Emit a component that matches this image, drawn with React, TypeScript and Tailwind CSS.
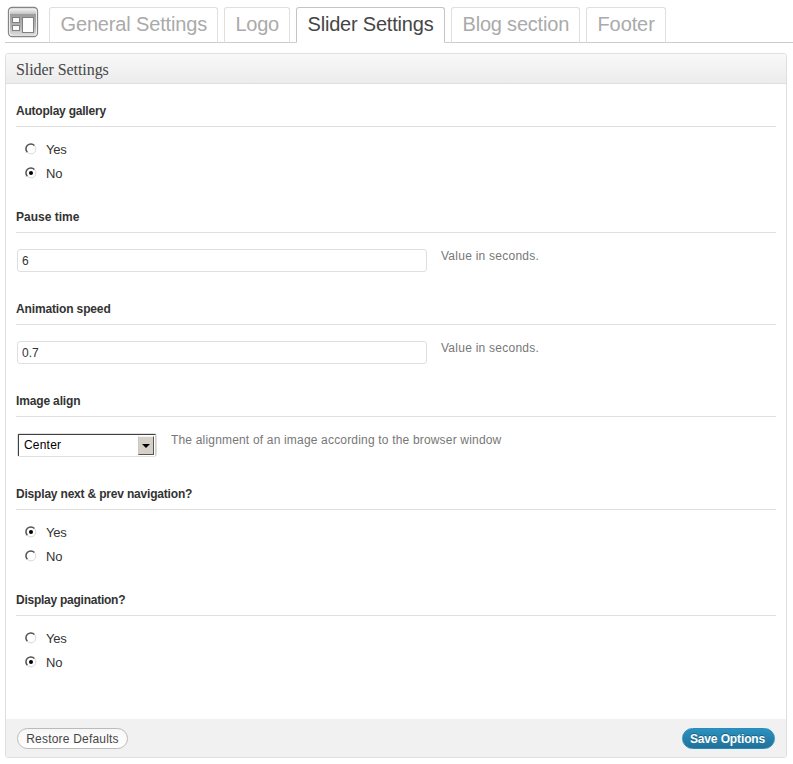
import React from "react";

type TabProps = { label: string; width: string; spacing: string; active?: boolean };

function Tab({ label, width, spacing, active }: TabProps) {
  return (
    <div
      className={`${width} ${spacing} h-9 shrink-0 rounded-t-[3px] border pl-[10.5px] text-[20px] leading-[33px] whitespace-nowrap ${
        active ? "border-[#c4c4c4] border-b-white bg-white text-[#464646]" : "border-[#dfdfdf] border-b-[#cccccc] text-[#aaaaaa]"
      }`}
    >
      {label}
    </div>
  );
}

function LayoutIcon() {
  return (
    <svg width="32" height="32" viewBox="0 0 32 32" className="mt-[6px] mr-[10px] ml-[2px] shrink-0">
      <defs>
        <linearGradient id="bar" x1="0" y1="0" x2="0" y2="1">
          <stop offset="0" stopColor="#f0f0f0" />
          <stop offset="1" stopColor="#c4c4c4" />
        </linearGradient>
        <linearGradient id="body" x1="0" y1="0" x2="0" y2="1">
          <stop offset="0" stopColor="#9c9c9c" />
          <stop offset="0.6" stopColor="#b4b4b4" />
          <stop offset="1" stopColor="#dcdcdc" />
        </linearGradient>
      </defs>
      <rect x="1.5" y="1.5" width="29" height="29" rx="3.5" fill="white" stroke="#858585" strokeWidth="1.3" />
      <path d="M3 8V5Q3 3 5 3H27Q29 3 29 5V8Z" fill="url(#bar)" />
      <path d="M3 8H29V27Q29 29 27 29H5Q3 29 3 27Z" fill="url(#body)" />
      <rect x="5.5" y="11.5" width="7" height="5" fill="#fafafa" stroke="#808080" />
      <rect x="5.5" y="19.5" width="7" height="5" fill="#fafafa" stroke="#808080" />
      <rect x="15.5" y="11.5" width="11" height="15" fill="white" stroke="#808080" />
    </svg>
  );
}

function Radio({ label, checked }: { label: string; checked: boolean }) {
  return (
    <div className="flex h-6 items-center pl-[9px]">
      <svg width="12" height="12" viewBox="0 0 12 12" className="mb-[2px]">
        <circle cx="6" cy="6" r="4.9" fill="white" stroke="#d8d8d8" />
        <path d="M2.3 9.2A4.8 4.8 0 0 1 9.4 2.4" fill="none" stroke="#555555" strokeWidth="1.5" />
        {checked && <circle cx="6" cy="6" r="2" fill="black" />}
      </svg>
      <span className="ml-[9px] text-[13px] leading-6 tracking-[-0.2px] text-[#333333]">{label}</span>
    </div>
  );
}

function Section({ title, spacing, height, children }: { title: string; spacing: string; height: string; children: React.ReactNode }) {
  return (
    <section className={height}>
      <h3 className={`${spacing} h-[30px] border-b border-[#dfdfdf] text-[12px] leading-[28px] font-bold whitespace-nowrap text-[#333333]`}>{title}</h3>
      {children}
    </section>
  );
}

function Choice({ value }: { value: "Yes" | "No" }) {
  return (
    <div className="pt-[11px]">
      <Radio label="Yes" checked={value === "Yes"} />
      <Radio label="No" checked={value === "No"} />
    </div>
  );
}

function Field({ value }: { value: string }) {
  return (
    <div className="flex pt-4 pl-px">
      <input
        readOnly
        value={value}
        className="h-[23px] w-[410px] rounded-[3px] border border-[#dfdfdf] bg-white px-1 text-[12px] text-[#333333] outline-none"
      />
      <span className="ml-[14px] h-[14px] text-[12px] leading-[14px] tracking-[0.25px] text-[#777777]">Value in seconds.</span>
    </div>
  );
}

export default function App() {
  return (
    <main className="h-[764px] w-[793px] bg-white pl-[5px] font-['Liberation_Sans',Arial,sans-serif]">
      <nav className="flex h-[43px] border-b border-[#cccccc]">
        <LayoutIcon />
        <div className="mt-[7px] flex gap-[6px]">
          <Tab label="General Settings" width="w-[169px]" spacing="tracking-[-0.15px]" />
          <Tab label="Logo" width="w-[66px]" spacing="tracking-[-0.3px]" />
          <Tab label="Slider Settings" width="w-[149px]" spacing="tracking-[-0.2px]" active />
          <Tab label="Blog section" width="w-[129px]" spacing="tracking-[-0.2px]" />
          <Tab label="Footer" width="w-[80px]" spacing="tracking-[-0.1px]" />
        </div>
      </nav>
      <div className="mt-[10px] flex h-[705px] w-[782px] flex-col overflow-hidden rounded-[3px] border border-[#dfdfdf]">
        <h2 className="h-[30px] shrink-0 border-b border-[#dfdfdf] bg-linear-to-b from-[#f8f8f8] to-[#ececec] pl-[10px] font-['Liberation_Serif',serif] text-[16px] leading-[31px] tracking-[-0.07px] text-[#464646]">
          Slider Settings
        </h2>
        <div className="flex-1 px-[10px] pt-[13px]">
          <Section title="Autoplay gallery" spacing="tracking-[-0.22px]" height="h-[106px]">
            <Choice value="No" />
          </Section>
          <Section title="Pause time" spacing="tracking-[0px]" height="h-[92px]">
            <Field value="6" />
          </Section>
          <Section title="Animation speed" spacing="tracking-[-0.14px]" height="h-[92px]">
            <Field value="0.7" />
          </Section>
          <Section title="Image align" spacing="tracking-[-0.15px]" height="h-[93px]">
            <div className="flex pt-4 pl-px">
              <div className="h-6 w-[140px] rounded-[3px] border border-[#dfdfdf]">
                <div className="flex h-[22px] border-t border-r border-l border-t-[#404040] border-r-[#d4d0c8] border-l-[#404040] bg-white pl-[5px] text-[12px] leading-5 text-black">
                  <span className="flex-1 tracking-[0.2px]">Center</span>
                  <span className="mt-px mr-px flex h-[19px] w-4 items-center justify-center border border-t-[#f4f4f4] border-r-[#555555] border-b-[#555555] border-l-[#c8c8c8] bg-[#d4d0c8]">
                    <svg width="8" height="4" viewBox="0 0 8 4" className="shrink-0"><path d="M0 0H8L4 4Z" /></svg>
                  </span>
                </div>
              </div>
              <span className="ml-[14px] h-[14px] text-[12px] leading-[14px] tracking-[0.18px] whitespace-nowrap text-[#777777]">
                The alignment of an image according to the browser window
              </span>
            </div>
          </Section>
          <Section title="Display next &amp; prev navigation?" spacing="tracking-[-0.19px]" height="h-[106px]">
            <Choice value="Yes" />
          </Section>
          <Section title="Display pagination?" spacing="tracking-[-0.25px]" height="h-[106px]">
            <Choice value="No" />
          </Section>
        </div>
        <footer className="flex h-[38px] shrink-0 items-center justify-between bg-[#f1f1f1] pr-[11px] pl-[11px]">
          <button className="h-[21px] w-[111px] rounded-full border border-[#bbbbbb] bg-linear-to-b from-[#f7f7f7] to-white pt-px text-[12px] leading-[19px] tracking-[0.2px] whitespace-nowrap text-[#464646]">
            Restore Defaults
          </button>
          <button className="h-[21px] w-[93px] rounded-full border border-[#298cba] bg-linear-to-b from-[#2a91bf] to-[#217199] pt-px pr-[2px] text-[12px] leading-[19px] font-bold tracking-[-0.12px] whitespace-nowrap text-white [text-shadow:0_-1px_0_rgba(0,0,0,0.3)]">
            Save Options
          </button>
        </footer>
      </div>
    </main>
  );
}
